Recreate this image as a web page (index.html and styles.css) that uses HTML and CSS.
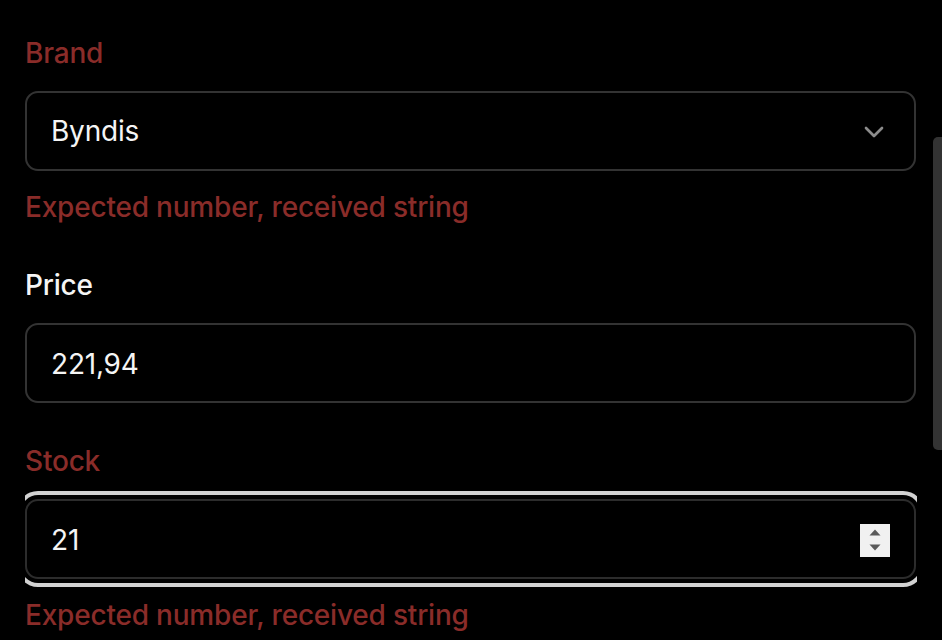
FILE: index.html
```html
<!DOCTYPE html>
<html lang="en">
<head>
    <meta charset="UTF-8">
    <meta name="viewport" content="width=device-width, initial-scale=1.0">
    <title>Edit product</title>
    <link rel="stylesheet" href="styles.css">
</head>
<body>
    <form class="product-form">
      <div class="form-item">
        <label class="form-label error" for="brand">Brand</label>
        <button class="select-trigger" id="brand" type="button">
          <span>Byndis</span>
          <svg class="chevron" width="32" height="32" viewBox="0 0 24 24" fill="none" stroke="currentColor" stroke-width="2" stroke-linecap="round" stroke-linejoin="round"><path d="m6 9 6 6 6-6"/></svg>
        </button>
        <p class="form-message">Expected number, received string</p>
      </div>

      <div class="form-item">
        <label class="form-label" for="price">Price</label>
        <div class="field">
          <input class="field-input" id="price" type="text" value="221,94">
        </div>
      </div>

      <div class="form-item">
        <label class="form-label error" for="stock">Stock</label>
        <div class="field focused">
          <input class="field-input" id="stock" type="text" value="21">
          <span class="spinner">
            <svg width="30" height="33" viewBox="0 0 30 33"><path d="M15 5.5 20.5 11.5H9.5Z" fill="#5a5a5a"/><path d="M9.5 20.5H20.5L15 26.5Z" fill="#5a5a5a"/></svg>
          </span>
        </div>
        <p class="form-message">Expected number, received string</p>
      </div>
    </form>
    <div class="scroll-thumb"></div>
</body>
</html>
```

FILE: styles.css
```css
html, body {
  margin: 0;
  padding: 0;
  background: #000;
  overflow: hidden;
}
body {
  font-family: Inter, "Noto Sans", sans-serif;
  color: #f5f5f5;
  height: 640px;
  letter-spacing: -0.2px;
}
.product-form {
  width: 892px;
  margin: 0 0 0 25px;
  padding-top: 39px;
  overflow-x: clip;
}
.form-item {
  display: flex;
  flex-direction: column;
  margin-bottom: 50px;
}
.form-item:nth-child(2) {
  margin-bottom: 44px;
}
.form-label {
  font-size: 28px;
  line-height: 28px;
  font-weight: 500;
  color: #f5f5f5;
  margin-bottom: 24px;
}
.form-label.error {
  color: #8a2c29;
}
.select-trigger,
.field {
  box-sizing: border-box;
  width: 891px;
  height: 80px;
  border: 2px solid #333;
  border-radius: 13px;
  background: #000;
  display: flex;
  align-items: center;
  justify-content: space-between;
  padding: 0 24px 0 24px;
  font-family: inherit;
  font-size: 28px;
  letter-spacing: -0.2px;
  color: #f5f5f5;
}
.select-trigger .chevron {
  color: #8c8c8c;
  margin-top: 2px;
}
.field.focused {
  border-color: #2c2c2c;
  box-shadow: 0 0 0 4px #000, 0 0 0 8px #d2d2d2;
}
.field-input {
  flex: 1;
  min-width: 0;
  border: 0;
  outline: 0;
  background: transparent;
  font-family: inherit;
  font-size: 28px;
  letter-spacing: -0.2px;
  color: #f5f5f5;
  padding: 0;
  margin-top: 2px;
}
.spinner {
  width: 30px;
  height: 33px;
  background: #f1f1f1;
  display: flex;
  margin-top: 3px;
}
.form-message {
  margin: 22px 0 0;
  font-size: 28px;
  line-height: 28px;
  font-weight: 500;
  color: #8a2c29;
}
.scroll-thumb {
  position: absolute;
  top: 137px;
  right: 0;
  width: 9px;
  height: 313px;
  background: #333;
  border-radius: 5px 0 0 5px;
}
```
